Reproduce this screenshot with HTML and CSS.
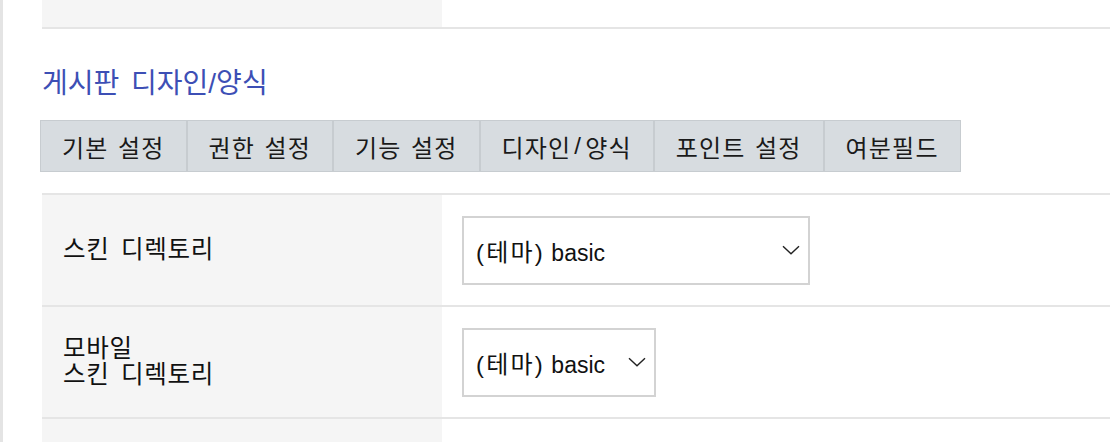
FILE: index.html
```html
<!DOCTYPE html>
<html lang="ko">
<head>
<meta charset="utf-8">
<title>게시판 디자인/양식</title>
<link rel="stylesheet" href="styles.css">
</head>
<body>
<div class="page">
  <div class="content">
    <div class="form-row form-row--cut">
      <div class="form-label"></div>
      <div class="form-field"></div>
    </div>

    <h2 class="section-title">게시판 디자인/양식</h2>

    <ul class="tabs">
      <li class="tab">기본 설정</li>
      <li class="tab">권한 설정</li>
      <li class="tab">기능 설정</li>
      <li class="tab">디자인<span class="slash">/</span>양식</li>
      <li class="tab">포인트 설정</li>
      <li class="tab">여분필드</li>
    </ul>

    <div class="form-table">
      <div class="form-row">
        <div class="form-label">스킨 디렉토리</div>
        <div class="form-field">
          <div class="select select--wide">
            <span class="select-value"><span class="select-theme">(테마)</span> basic</span>
            <svg class="chevron" viewBox="0 0 18 10" width="18" height="10"><path d="M1 1.2 L9 8.8 L17 1.2" fill="none" stroke="#222" stroke-width="1.4"/></svg>
          </div>
        </div>
      </div>
      <div class="form-row">
        <div class="form-label">모바일<br>스킨 디렉토리</div>
        <div class="form-field">
          <div class="select select--narrow">
            <span class="select-value"><span class="select-theme">(테마)</span> basic</span>
            <svg class="chevron" viewBox="0 0 18 10" width="18" height="10"><path d="M1 1.2 L9 8.8 L17 1.2" fill="none" stroke="#222" stroke-width="1.4"/></svg>
          </div>
        </div>
      </div>
      <div class="form-row">
        <div class="form-label"></div>
        <div class="form-field">
          <div class="select select--wide select--cut"></div>
        </div>
      </div>
    </div>
  </div>
</div>
</body>
</html>
```

FILE: styles.css
```css
* { box-sizing: border-box; }

html, body {
  margin: 0;
  padding: 0;
  height: 100%;
  overflow: hidden;
  background: #fff;
}

body {
  font-family: "Liberation Sans", "Noto Sans CJK KR", sans-serif;
  color: #111;
}

.page {
  height: 100%;
  border-left: 3px solid #e4e4e4;
}

.content {
  padding-left: 39px;
}

.form-row {
  display: grid;
  grid-template-columns: 400px 1fr;
  height: 112px;
  border-bottom: 2px solid #e5e5e5;
}

.form-row--cut {
  height: 29px;
}

.form-label {
  background: #f5f5f5;
  display: flex;
  align-items: center;
  padding: 0 21px;
  font-size: 24.5px;
  line-height: 26px;
  word-spacing: 4px;
  letter-spacing: 0.7px;
}

.form-field {
  display: flex;
  align-items: center;
  padding: 0 20px;
}

.section-title {
  margin: 37px 0 0;
  font-size: 28px;
  line-height: 36px;
  font-weight: normal;
  color: #3d4fb5;
  word-spacing: 4px;
}

.tabs {
  list-style: none;
  margin: 18px 0 0 -2px;
  padding: 0;
  display: flex;
}

.tab {
  height: 52px;
  display: flex;
  align-items: center;
  padding: 0 21px;
  background: #d7dce0;
  border: 1px solid #c7ccd0;
  font-size: 24px;
  color: #1a1a1a;
  letter-spacing: 1.2px;
  word-spacing: 1.5px;
}

.slash {
  margin: 0 3px;
}

.form-table {
  margin-top: 21px;
  border-top: 2px solid #e5e5e5;
}

.select {
  height: 69px;
  border: 2px solid #d3d3d3;
  display: flex;
  align-items: center;
  justify-content: space-between;
  padding: 0 8px 0 12px;
  background: #fff;
  font-size: 23px;
  color: #111;
}

.select--wide { width: 348px; }
.select--narrow { width: 194px; }

.select--cut {
  align-self: flex-end;
  margin-bottom: -60px;
}

.select-theme {
  font-size: 24px;
  letter-spacing: 2.2px;
}

.chevron {
  flex: none;
}
```
